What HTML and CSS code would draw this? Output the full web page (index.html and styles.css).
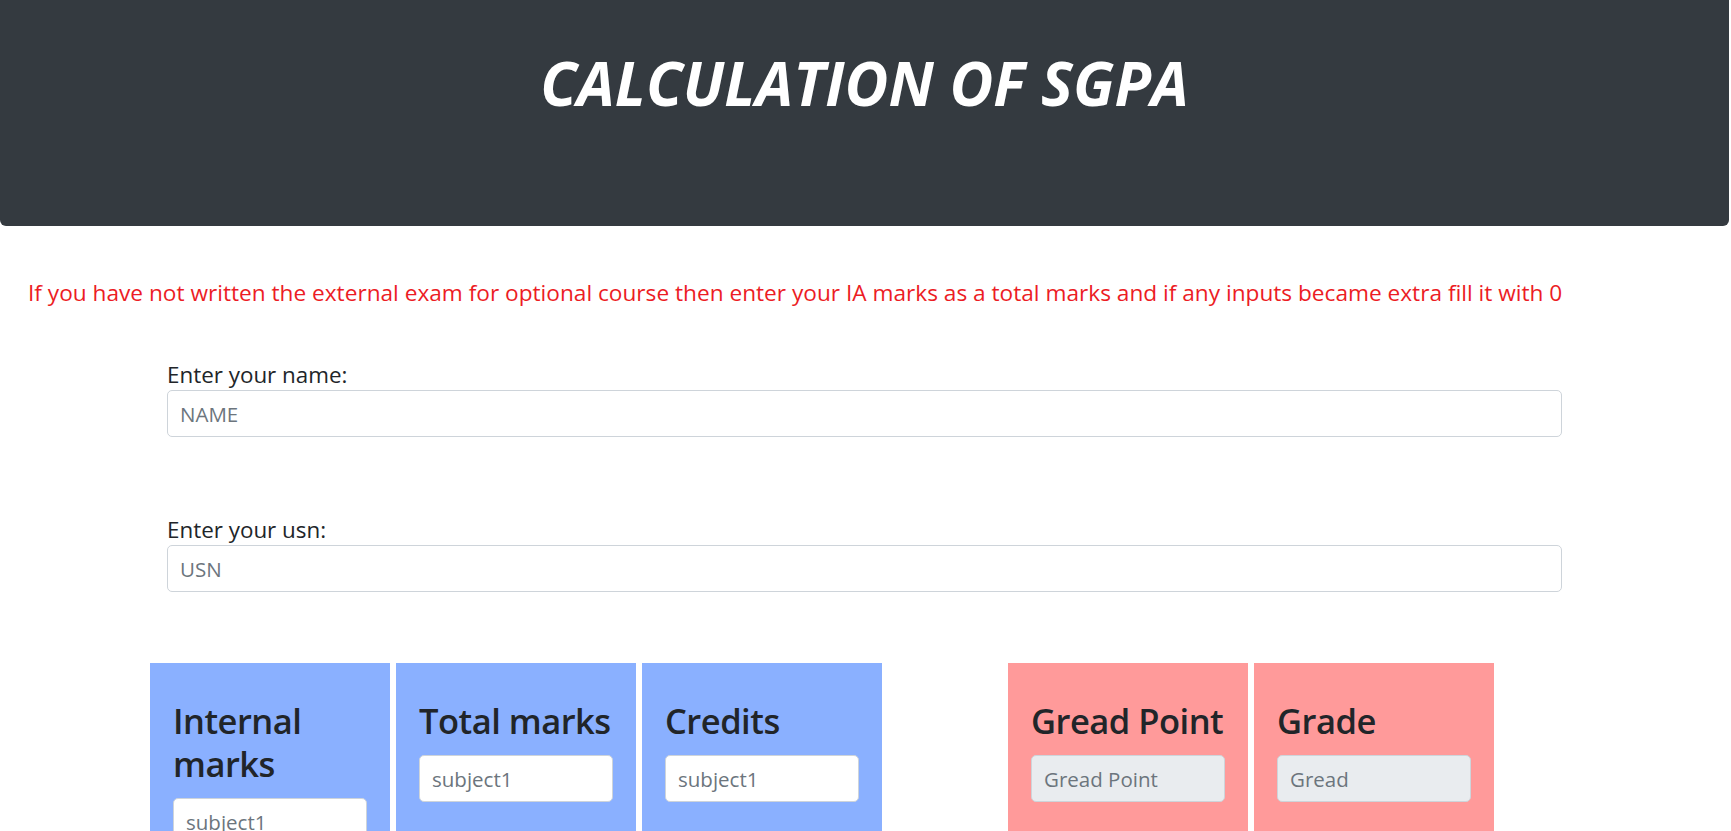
FILE: index.html
```html
<!DOCTYPE html>
<html lang="en">
<head>
<meta charset="utf-8">
<title>Calculation of SGPA</title>
<link rel="stylesheet" href="styles.css">
</head>
<body>
<header class="jumbotron">
  <h1 class="title">CALCULATION OF SGPA</h1>
</header>
<p class="notice">If you have not written the external exam for optional course then enter your IA marks as a total marks and if any inputs became extra fill it with 0</p>
<form class="details">
  <div class="field">
    <label class="field-label" for="name">Enter your name:</label>
    <input class="control" id="name" type="text" placeholder="NAME">
  </div>
  <div class="field field-usn">
    <label class="field-label" for="usn">Enter your usn:</label>
    <input class="control" id="usn" type="text" placeholder="USN">
  </div>
</form>
<section class="columns">
  <div class="group">
    <div class="col col-blue">
      <h3 class="col-title">Internal marks</h3>
      <input class="control" type="text" placeholder="subject1">
      <input class="control" type="text" placeholder="subject2">
      <input class="control" type="text" placeholder="subject3">
    </div>
    <div class="col col-blue">
      <h3 class="col-title">Total marks</h3>
      <input class="control" type="text" placeholder="subject1">
      <input class="control" type="text" placeholder="subject2">
      <input class="control" type="text" placeholder="subject3">
    </div>
    <div class="col col-blue">
      <h3 class="col-title">Credits</h3>
      <input class="control" type="text" placeholder="subject1">
      <input class="control" type="text" placeholder="subject2">
      <input class="control" type="text" placeholder="subject3">
    </div>
  </div>
  <div class="group">
    <div class="col col-pink">
      <h3 class="col-title">Gread Point</h3>
      <input class="control control-readonly" type="text" placeholder="Gread Point" readonly>
    </div>
    <div class="col col-pink">
      <h3 class="col-title">Grade</h3>
      <input class="control control-readonly" type="text" placeholder="Gread" readonly>
    </div>
  </div>
</section>
</body>
</html>
```
FILE: styles.css
```css
* { box-sizing: border-box; }
html, body { margin: 0; padding: 0; }
body {
  font-family: "Open Sans", "Noto Sans", "Liberation Sans", sans-serif;
  font-size: 22.4px;
  line-height: 1.5;
  color: #212529;
  background: #fff;
}
.jumbotron {
  width: calc(100% - 2px);
  height: 226px;
  background: #343a40;
  border-radius: 0 0 6px 6px;
  padding-top: 47px;
}
.title {
  margin: 0;
  text-align: center;
  color: #fff;
  font-size: 60px;
  line-height: 72px;
  font-weight: 700;
  font-style: italic;
  letter-spacing: 0.1px;
}
.notice {
  margin: 49px 0 0 28px;
  font-size: 22.65px;
  line-height: 36px;
  color: #ec1c24;
}
.details {
  width: 1395px;
  margin: 49px 0 0 167px;
}
.field { display: flex; flex-direction: column; }
.field-usn { margin-top: 78px; }
.field-label {
  display: block;
  font-size: 22.4px;
  line-height: 30px;
}
.control {
  display: block;
  width: 100%;
  height: 47px;
  padding: 7px 12px;
  font-family: inherit;
  font-size: 20.5px;
  line-height: 30px;
  color: #495057;
  background: #fff;
  border: 1px solid #ced4da;
  border-radius: 5px;
}
.control::placeholder { color: #6c757d; opacity: 1; }
.control-readonly { background: #e9ecef; }
.columns {
  display: flex;
  gap: 126px;
  padding-left: 150px;
  margin-top: 71px;
}
.group { display: flex; gap: 6px; }
.col {
  width: 240px;
  padding: 36px 23px 24px;
  display: flex;
  flex-direction: column;
  gap: 13px;
}
.col .control + .control { margin-top: 27px; }
.col-blue { background: #8ab0ff; }
.col-pink { background: #ff9a9a; }
.col-title {
  margin: 0;
  font-size: 34.5px;
  line-height: 43px;
  font-weight: 600;
  letter-spacing: -0.5px;
  color: #212529;
}
```
